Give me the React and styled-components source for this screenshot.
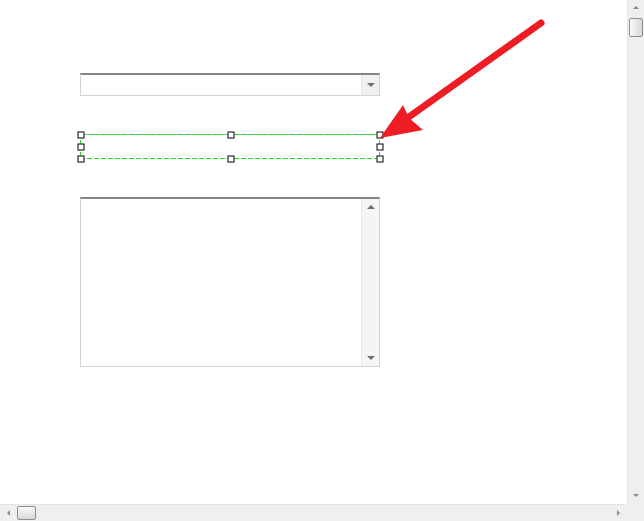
import React from 'react';
import styled, { createGlobalStyle } from 'styled-components';

const Global = createGlobalStyle`
  html, body { margin: 0; padding: 0; overflow: hidden; background: #fff; }
  body { font-family: "Liberation Sans", Arial, sans-serif; }
`;

const Window = styled.div`
  position: relative;
  width: 644px;
  height: 521px;
  display: grid;
  grid-template-columns: 627px 17px;
  grid-template-rows: 504px 17px;
  background: #fff;
`;

const Page = styled.div`
  padding: 73px 0 0 80px;
  display: flex;
  flex-direction: column;
  align-items: flex-start;
`;

const Select = styled.div`
  width: 300px;
  height: 23px;
  box-sizing: border-box;
  border: 1px solid #d4d4d4;
  border-top: 2px solid #858585;
  display: flex;
  justify-content: flex-end;
`;

const SelectButton = styled.div`
  width: 17px;
  background: #f0f0f0;
  border-left: 1px solid #e6e6e6;
  display: flex;
  align-items: center;
  justify-content: center;
`;

const Tri = styled.div`
  width: 0;
  height: 0;
  border-left: ${p => p.size || 4}px solid transparent;
  border-right: ${p => p.size || 4}px solid transparent;
  ${p => (p.up ? 'border-bottom' : 'border-top')}: ${p => p.size || 4}px solid ${p => p.color || '#6f6f6f'};
`;

const TriSide = styled.div`
  width: 0;
  height: 0;
  border-top: 3px solid transparent;
  border-bottom: 3px solid transparent;
  ${p => (p.left ? 'border-right' : 'border-left')}: 3px solid #8a8a8a;
`;

const Selection = styled.div`
  position: relative;
  margin-top: 38px;
  width: 300px;
  height: 25px;
  box-sizing: border-box;
`;

const HLine = styled.div`
  position: absolute;
  left: 0;
  right: 0;
  height: 1px;
  top: ${p => p.y}px;
  background: ${p =>
    p.gray
      ? 'repeating-linear-gradient(90deg, #22e022 0 5px, #a8a8a8 5px 7px)'
      : 'repeating-linear-gradient(90deg, #18e018 0 5px, transparent 5px 7px)'};
`;

const VLine = styled.div`
  position: absolute;
  top: 0;
  bottom: 0;
  width: 1px;
  left: ${p => p.x}px;
  background: repeating-linear-gradient(180deg, #18e018 0 4px, transparent 4px 6px);
`;

const Handle = styled.span`
  position: absolute;
  width: 5px;
  height: 5px;
  border: 1px solid #000;
  background: #fff;
  left: ${p => p.x}px;
  top: ${p => p.y}px;
  transform: translate(-50%, -50%);
`;

const TextArea = styled.div`
  margin-top: 38px;
  width: 300px;
  height: 170px;
  box-sizing: border-box;
  border: 1px solid #d4d4d4;
  border-top: 2px solid #858585;
  display: flex;
  justify-content: flex-end;
`;

const InnerBar = styled.div`
  width: 17px;
  background: #f5f5f5;
  border-left: 1px solid #e8e8e8;
  display: flex;
  flex-direction: column;
  justify-content: space-between;
  align-items: center;
  padding: 6px 0 6px;
`;

const VBar = styled.div`
  background: #efefef;
  border-left: 1px solid #e4e4e4;
  display: flex;
  flex-direction: column;
  align-items: center;
  padding: 6px 0 7px;
`;

const VThumb = styled.div`
  margin-top: 9px;
  width: 12px;
  height: 17px;
  border: 1px solid #8d8d8d;
  border-radius: 2px;
  background: linear-gradient(90deg, #fafafa, #d8d8d8);
`;

const Spacer = styled.div`
  flex: 1;
`;

const HBar = styled.div`
  background: #efefef;
  border-top: 1px solid #e4e4e4;
  display: flex;
  align-items: center;
  padding: 0 7px 0 7px;
`;

const HThumb = styled.div`
  margin-left: 7px;
  width: 17px;
  height: 12px;
  border: 1px solid #8d8d8d;
  border-radius: 2px;
  background: linear-gradient(180deg, #fafafa, #d8d8d8);
`;

const Corner = styled.div`
  background: #efefef;
`;

const Overlay = styled.svg`
  position: absolute;
  left: 0;
  top: 0;
  pointer-events: none;
`;

const handles = [
  [0, 0], [150, 0], [299, 0],
  [0, 12], [299, 12],
  [0, 24], [150, 24], [299, 24],
];

export default function App() {
  return (
    <>
      <Global />
      <Window>
        <Page>
          <Select>
            <SelectButton>
              <Tri size={4} />
            </SelectButton>
          </Select>
          <Selection>
            <HLine y={0} gray />
            <HLine y={24} />
            <VLine x={0} />
            <VLine x={299} />
            {handles.map(([x, y]) => (
              <Handle key={`${x}-${y}`} x={x + 0.5} y={y + 0.5} />
            ))}
          </Selection>
          <TextArea>
            <InnerBar>
              <Tri up size={4} />
              <Tri size={4} />
            </InnerBar>
          </TextArea>
        </Page>
        <VBar>
          <Tri up size={3} color="#8a8a8a" />
          <VThumb />
          <Spacer />
          <Tri size={3} color="#8a8a8a" />
        </VBar>
        <HBar>
          <TriSide left />
          <HThumb />
          <Spacer />
          <TriSide />
        </HBar>
        <Corner />
        <Overlay width="644" height="521" viewBox="0 0 644 521">
          <line x1="541" y1="23" x2="406" y2="119" stroke="#ee1c25" strokeWidth="7" strokeLinecap="round" />
          <polygon points="380,138 403,105 409,118 423,130" fill="#ee1c25" />
        </Overlay>
      </Window>
    </>
  );
}
